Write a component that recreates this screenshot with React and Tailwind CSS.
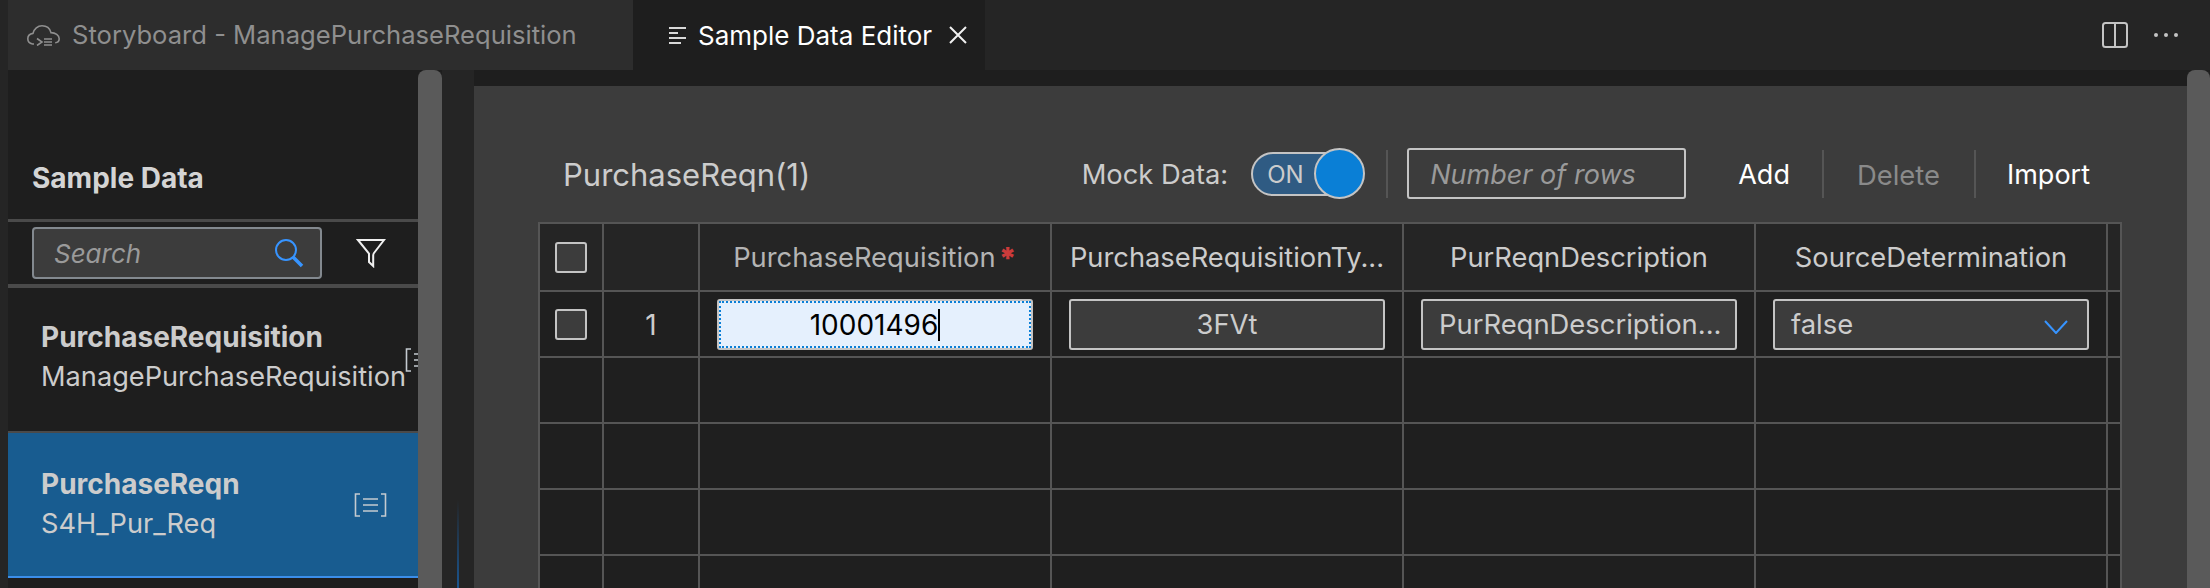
const font = "font-['Inter',sans-serif]";

const CloudIcon = () => (
  <svg width="33" height="21" viewBox="0 0 33 21" fill="none" stroke="#8f8f8f" strokeWidth="1.6" className="shrink-0">
    <path d="M7 19H5.500C2.800 18.500.8 16.300.8 13.800.8 11 3 8.800 6 8.400 7 4 10.800.8 15 .8c4.800 0 8 3 9 6.800 4.400 0 8.200 2.600 8.200 6.200 0 2.200-1.600 3.800-4 4" />
    <path d="M10 13.500l5 3.500-5 3.500" />
    <path d="M17 14h8M17 17h8M17 20h8" />
  </svg>
);

const ListLines = () => (
  <svg width="17" height="18" viewBox="0 0 17 18" fill="none" stroke="#d8d8d8" strokeWidth="2" className="shrink-0">
    <path d="M0 2h17M0 7h9M0 12h17M0 17h12" />
  </svg>
);

const BracketList = ({ className }) => (
  <svg width="33" height="24" viewBox="0 0 33 24" fill="none" stroke="#c4cad0" strokeWidth="1.6" className={`shrink-0 ${className}`}>
    <path d="M6 1H1.500v22H6M27 1h4.500v22H27" />
    <path d="M9 6h15M9 12h15M9 18h15" />
  </svg>
);

function SidebarItem({ title, subtitle, active }) {
  return (
    <div className={`h-[145px] pl-[33px] flex items-center overflow-hidden ${active ? 'bg-[#185c90] border-b-2 border-[#3b8eea]' : 'border-b-2 border-[#4a4a4a]'}`}>
      <div className={active ? 'shrink-0 pb-0.5' : 'shrink-0 pb-1.5'}>
        <div className="text-[28px] leading-[40px] font-bold text-[#cccccc] whitespace-nowrap">{title}</div>
        <div className="text-[27.2px] leading-[40px] text-[#cccccc] whitespace-nowrap">{subtitle}</div>
      </div>
      <BracketList className={active ? 'ml-auto mr-[31px]' : '-ml-px'} />
    </div>
  );
}

function Checkbox() {
  return <div className="w-8 h-[31px] rounded-[3px] border-2 border-[#c4c4c4] bg-[#3c3c3c]" />;
}

const inputCell = 'h-[51px] w-[316px] pt-0.5 rounded-[3px] border-2 border-[#c4c4c4] bg-[#3c3c3c] text-[27.4px] text-[#cccccc] flex items-center';

const rowCell = 'border-r-2 border-b-2 border-[#555555] flex items-center justify-center';
const headCell = `${rowCell} h-[68px] bg-[#252525]`;
const dataCell = `${rowCell} h-[66px] bg-[#1f1f1f]`;

function EmptyRow() {
  return (
    <>
      {[0, 1, 2, 3, 4, 5, 6].map((i) => (
        <div key={i} className={dataCell} />
      ))}
    </>
  );
}

const Separator = () => <div className="w-0.5 h-12 bg-[#555555] shrink-0" />;

export default function App() {
  return (
    <div className={`w-[2210px] h-[588px] overflow-hidden bg-[#1e1e1e] flex flex-col ${font}`}>
      {/* tab strip */}
      <div className="h-[70px] shrink-0 bg-[#252525] flex items-stretch pl-2">
        <div className="w-[625px] bg-[#2d2d2d] flex items-center pl-[19px] gap-3">
          <CloudIcon />
          <span className="text-[25.6px] text-[#8f8f8f] whitespace-nowrap">Storyboard - ManagePurchaseRequisition</span>
        </div>
        <div className="w-[352px] bg-[#1e1e1e] flex items-center pl-[36px] gap-[12px]">
          <ListLines />
          <span className="text-[26px] text-white whitespace-nowrap">Sample Data Editor</span>
          <svg width="18" height="18" viewBox="0 0 18 18" stroke="#f0f0f0" strokeWidth="2" className="ml-[5px] shrink-0">
            <path d="M1 1l16 16M17 1L1 17" />
          </svg>
        </div>
        <div className="ml-auto flex items-center pr-[32px]">
          <svg width="26" height="26" viewBox="0 0 26 26" fill="none" stroke="#c4c4c4" strokeWidth="2">
            <rect x="1" y="1" width="24" height="24" rx="2.500" />
            <path d="M13 1v24" />
          </svg>
          <div className="flex gap-[6px] ml-[26px]">
            <div className="w-1 h-1 rounded-full bg-[#c4c4c4]" />
            <div className="w-1 h-1 rounded-full bg-[#c4c4c4]" />
            <div className="w-1 h-1 rounded-full bg-[#c4c4c4]" />
          </div>
        </div>
      </div>

      <div className="flex-1 min-h-0 flex">
        <div className="w-2 shrink-0 bg-[#252525]" />
        {/* sample data sidebar */}
        <div className="w-[410px] shrink-0 flex flex-col overflow-hidden">
          <div className="h-[152px] shrink-0 border-b-[3px] border-[#4a4a4a] flex items-end pl-6 pb-[20px]">
            <span className="text-[28px] leading-[42px] font-bold text-[#d4d4d4]">Sample Data</span>
          </div>
          <div className="h-[66px] shrink-0 border-b-4 border-[#4a4a4a] flex items-center pl-6">
            <div className="w-[290px] h-[52px] rounded border-2 border-[#83898f] bg-[#3c3c3c] flex items-center justify-between pl-5 pr-4">
              <span className="text-[26px] italic text-[#9a9a9a]">Search</span>
              <svg width="30" height="30" viewBox="0 0 30 30" fill="none" stroke="#3794ff">
                <circle cx="12" cy="12" r="10" strokeWidth="2" />
                <path d="M19 19l9 9" strokeWidth="3.500" />
              </svg>
            </div>
            <svg width="30" height="30" viewBox="0 0 30 30" fill="none" stroke="#f0f0f0" strokeWidth="2" className="ml-[34px]">
              <path d="M2 2h26L18 15c-.6.800-.8 1.500-.8 2.500V28L13 24V15.500z" />
            </svg>
          </div>
          <SidebarItem title="PurchaseRequisition" subtitle="ManagePurchaseRequisition" />
          <SidebarItem title="PurchaseReqn" subtitle="S4H_Pur_Req" active />
        </div>
        {/* sidebar scrollbar */}
        <div className="w-6 shrink-0 bg-[#5a5a5a] rounded-t-lg" />
        <div className="w-8 shrink-0 flex justify-center pt-[430px] bg-[#252525]">
          <div className="w-0.5 h-[88px] mr-[1px] bg-gradient-to-b from-transparent to-[#1a5590]" />
        </div>

        {/* editor */}
        <div className="flex-1 min-w-0 flex flex-col pt-4">
          <div className="flex-1 min-h-0 bg-[#3c3c3c] pl-16 pt-[62px] overflow-hidden">
            <div className="h-[51px] flex items-center">
              <span className="ml-[25px] pt-1 text-[31px] text-[#cccccc] whitespace-nowrap">PurchaseReqn(1)</span>
              <span className="ml-auto pt-1 text-[27.3px] text-[#cccccc] whitespace-nowrap">Mock Data:</span>
              <div className="relative ml-[23px] w-[114px] h-[51px] flex items-center shrink-0">
                <div className="w-[100px] h-[44px] pt-0.5 rounded-full border-2 border-[#c4c4c4] bg-[#2f5b83] flex items-center pl-[14px] text-[24px] text-[#cccccc]">ON</div>
                <div className="absolute right-0 top-0 w-[51px] h-[51px] rounded-full border-2 border-[#c4c4c4] bg-[#0a7fd6]" />
              </div>
              <div className="ml-[21px]"><Separator /></div>
              <div className="ml-[19px] w-[279px] h-[51px] pt-1 rounded-[3px] border-2 border-[#c4c4c4] flex items-center pl-[21px] text-[27px] italic text-[#9a9a9a] whitespace-nowrap">Number of rows</div>
              <span className="ml-[52px] pt-1 text-[27px] text-white">Add</span>
              <div className="ml-[32px]"><Separator /></div>
              <span className="ml-[33px] pt-1 text-[27.4px] text-[#8a8a8a]">Delete</span>
              <div className="ml-[34px]"><Separator /></div>
              <span className="ml-[31px] mr-[97px] pt-1 text-[27px] text-white">Import</span>
            </div>

            {/* data table */}
            <div className="mt-[23px] w-[1584px] border-l-2 border-t-2 border-[#555555] grid grid-cols-[64px_96px_352px_352px_352px_352px_14px]">
              <div className={headCell}><Checkbox /></div>
              <div className={headCell} />
              <div className={`${headCell} pt-0.5 text-[27.3px] text-[#b4b4b4] gap-[3px]`}>
                <span>PurchaseRequisition</span>
                <span className="text-[#cc3b3b] font-black text-[30px] leading-none">*</span>
              </div>
              <div className={`${headCell} pt-0.5 text-[27.3px] text-[#cccccc]`}>PurchaseRequisitionTy...</div>
              <div className={`${headCell} pt-0.5 text-[27.3px] text-[#cccccc]`}>PurReqnDescription</div>
              <div className={`${headCell} pt-0.5 text-[27.3px] text-[#cccccc]`}>SourceDetermination</div>
              <div className={headCell} />

              <div className={dataCell}><Checkbox /></div>
              <div className={`${dataCell} pt-0.5 text-[28px] text-[#cccccc]`}>1</div>
              <div className={dataCell}>
                <div className="h-[51px] w-[316px] pt-0.5 rounded-[3px] border-2 border-[#c4c4c4] bg-[#e5f0fd] outline-dotted outline-2 -outline-offset-4 outline-[#0a7fd6] text-[28px] text-black flex items-center justify-center">
                  <span>10001496</span>
                  <span className="w-0.5 h-8 bg-black" />
                </div>
              </div>
              <div className={dataCell}>
                <div className={`${inputCell} justify-center`}>3FVt</div>
              </div>
              <div className={dataCell}>
                <div className={`${inputCell} pl-[16px] whitespace-nowrap`}>PurReqnDescription...</div>
              </div>
              <div className={dataCell}>
                <div className={`${inputCell} justify-between pl-[16px] pr-[19px]`}>
                  <span>false</span>
                  <svg width="24" height="14" viewBox="0 0 24 14" fill="none" stroke="#3794ff" strokeWidth="2" className="mt-[3px]">
                    <path d="M1 1l11 12L23 1" />
                  </svg>
                </div>
              </div>
              <div className={dataCell} />

              <EmptyRow />
              <EmptyRow />
              <EmptyRow />
              <EmptyRow />
            </div>
          </div>
        </div>

        {/* editor scrollbar */}
        <div className="w-[23px] shrink-0 bg-[#5a5a5a] rounded-t-lg" />
      </div>
    </div>
  );
}
